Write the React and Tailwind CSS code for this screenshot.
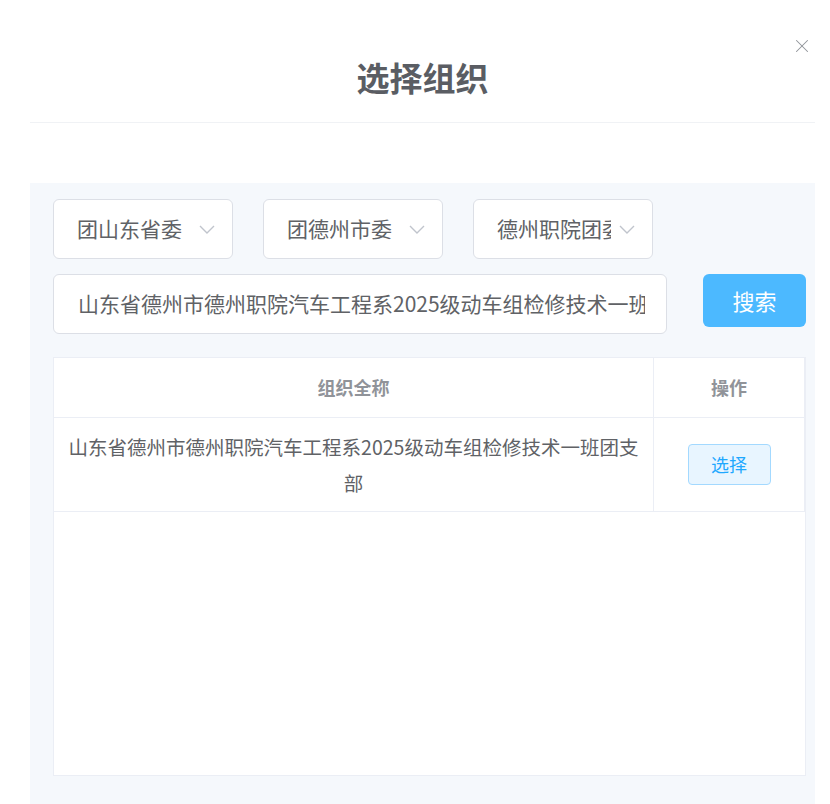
import { X } from "lucide-react";

const FONT = { fontFamily: '"Noto Sans CJK SC", "Noto Sans", sans-serif' };

const ORG_NAME = "山东省德州市德州职院汽车工程系2025级动车组检修技术一班团支部";

function Chevron() {
  return (
    <svg width="16" height="9" viewBox="0 0 16 9" fill="none" className="shrink-0">
      <path d="M1 1l7 7 7-7" stroke="#c0c4cc" strokeWidth="1.4" />
    </svg>
  );
}

function SelectBox({ label }) {
  return (
    <div className="w-[180px] h-[60px] bg-white border border-[#dcdfe6] rounded-[6px] flex items-center pl-[23px] pr-[17px]">
      <span className="flex-1 overflow-hidden whitespace-nowrap text-clip text-[21px] text-[#606266]">
        {label}
      </span>
      <span className="ml-[8px]">
        <Chevron />
      </span>
    </div>
  );
}

export default function App() {
  return (
    <div className="w-[830px] h-[804px] overflow-hidden bg-white pl-[30px] pr-[15px]" style={FONT}>
      {/* Header */}
      <div className="relative h-[123px] border-b border-[#f0f2f5]">
        <div className="pt-[55px] text-center text-[33px] leading-[44px] font-bold text-[#5a5d63]">
          选择组织
        </div>
        <button className="absolute right-[2px] top-[35px] text-[#909399]">
          <X size={22} strokeWidth={1.1} />
        </button>
      </div>

      {/* Panel */}
      <div className="mt-[60px] bg-[#f5f8fc] h-[640px] pt-[16px] pl-[23px] pr-[9px]">
        <div className="flex gap-[30px]">
          <SelectBox label="团山东省委" />
          <SelectBox label="团德州市委" />
          <SelectBox label="德州职院团委" />
        </div>

        <div className="flex items-start mt-[15px] gap-[36px]">
          <div className="w-[614px] h-[60px] bg-white border border-[#dcdfe6] rounded-[6px] flex items-center pl-[24px] pr-[21px]">
            <span className="overflow-hidden whitespace-nowrap text-clip text-[21px] text-[#606266]">
              山东省德州市德州职院汽车工程系2025级动车组检修技术一班团支部
            </span>
          </div>
          <button className="w-[104px] h-[53px] rounded-[6px] bg-[#4cb9ff] text-white text-[22px]">
            搜索
          </button>
        </div>

        {/* Table */}
        <div className="mt-[23px] w-[753px] h-[419px] bg-white border border-[#ebeef5]">
          <div className="flex h-[60px] border-b border-[#ebeef5] text-[18px] font-bold text-[#909399]">
            <div className="w-[600px] border-r border-[#ebeef5] flex items-center justify-center">
              组织全称
            </div>
            <div className="flex-1 flex items-center justify-center border-r border-[#ebeef5]">
              操作
            </div>
          </div>
          <div className="flex h-[94px] border-b border-[#ebeef5]">
            <div className="w-[600px] border-r border-[#ebeef5] flex items-center justify-center px-[10px] text-center text-[19.5px] leading-[36px] text-[#606266]">
              {ORG_NAME}
            </div>
            <div className="flex-1 flex items-center justify-center border-r border-[#ebeef5]">
              <button className="w-[83px] h-[41px] rounded-[4px] bg-[#e8f5ff] border border-[#a3d9ff] text-[#1fa8ff] text-[18px]">
                选择
              </button>
            </div>
          </div>
        </div>
      </div>
    </div>
  );
}
